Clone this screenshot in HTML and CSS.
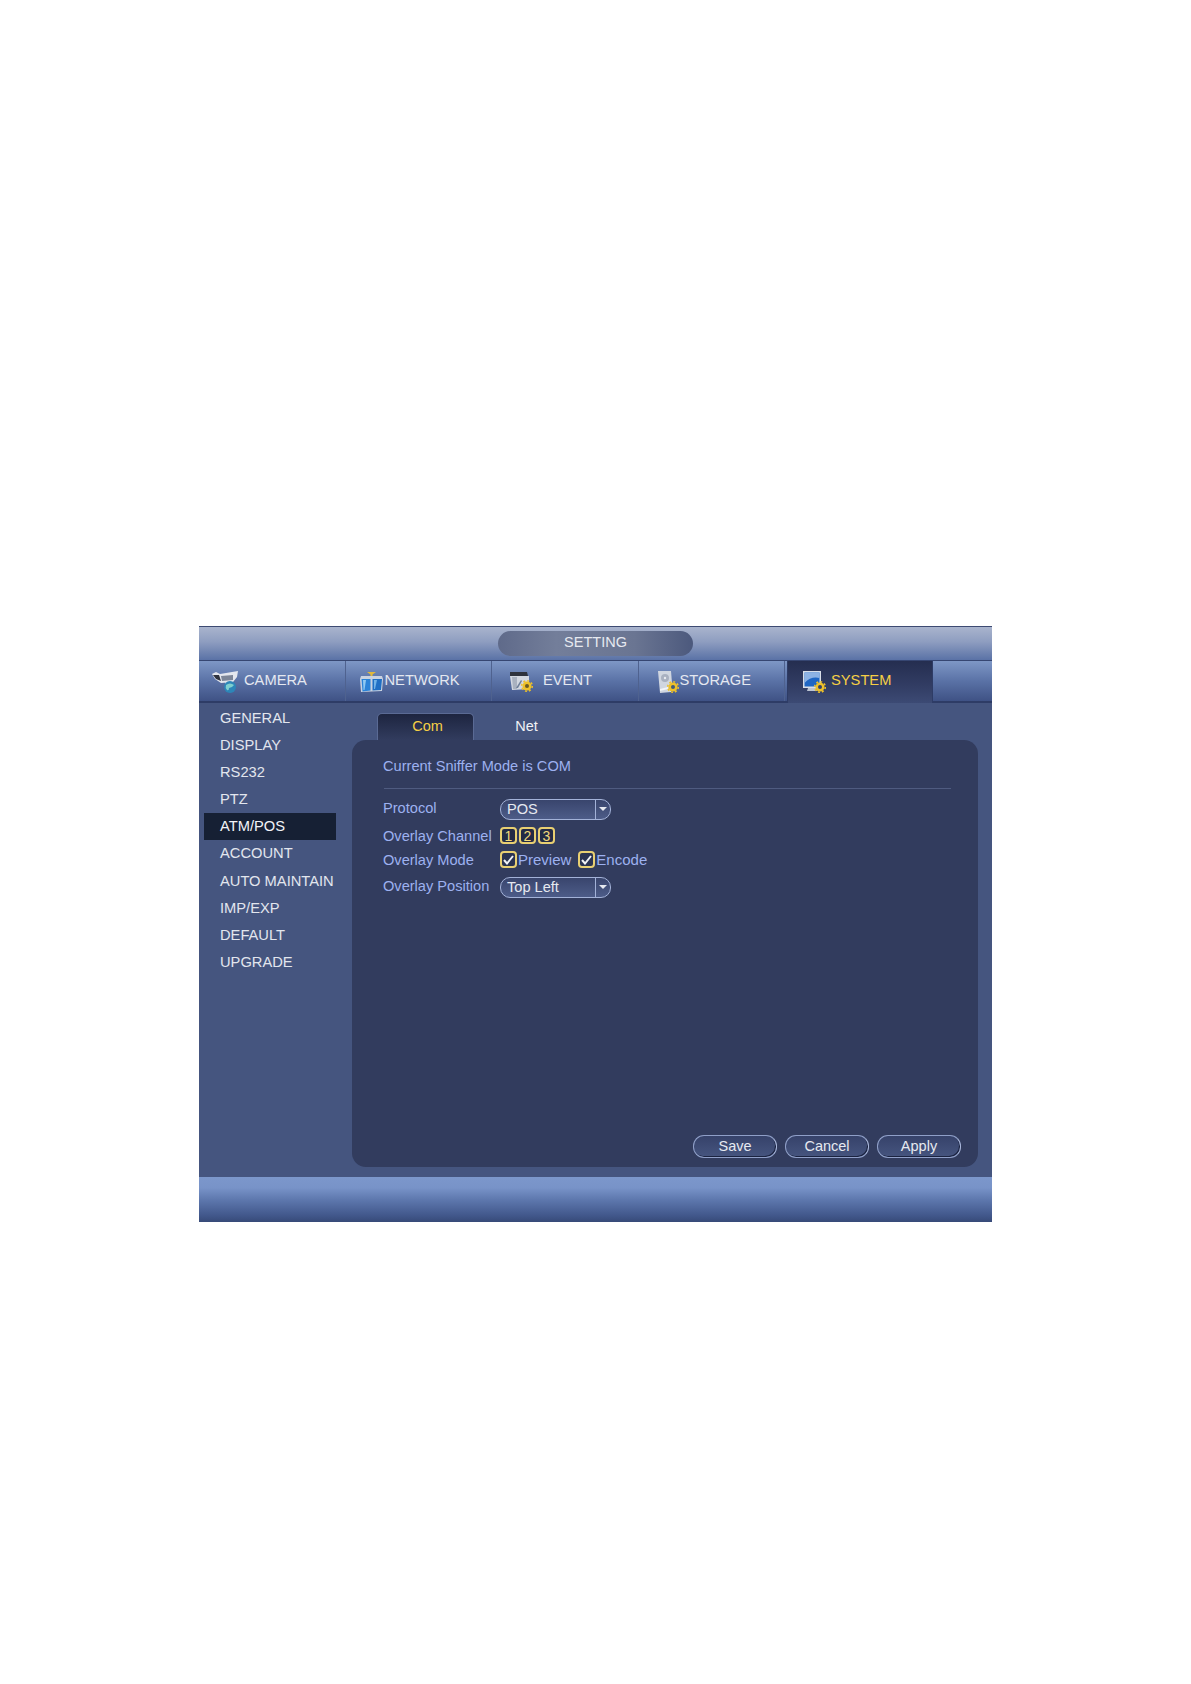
FILE: index.html
```html
<!DOCTYPE html>
<html lang="en">
<head>
    <meta charset="UTF-8">
    <title>SETTING</title>
    <link rel="stylesheet" href="styles.css">
</head>
<body>
<div class="window">
    <div class="title-bar">
        <div class="title-pill">SETTING</div>
    </div>

    <div class="tab-bar">
        <div class="tab tab-camera">
            <svg class="icon" width="26" height="22" viewBox="0 0 26 22">
                <path d="M0 3 L4 1 L8 3 L20 1 L26 0 L25 6 L21 11 L9 12 L3 8 Z" fill="#e4e7ee"/>
                <path d="M1 4 L7 4 L9 10 L4 8 Z" fill="#2f333f"/>
                <path d="M9 5 L21 4 L21 9 L10 10 Z" fill="#7d8698"/>
                <path d="M13 11 L18 10 L18 15 L13 15 Z" fill="#d5d9e2"/>
                <circle cx="18" cy="16" r="6" fill="#2d86b8"/>
                <path d="M14 14 Q18 11 22 14 Q20 17 17 17 Q17 20 15 19 Q13 17 14 14 Z" fill="#7fd0cf"/>
            </svg>
            <span class="tab-label">CAMERA</span>
        </div>
        <div class="tab tab-network">
            <svg class="icon" width="23" height="20" viewBox="0 0 23 20">
                <path d="M7 0 L16 0 L12.500 2.500 L12.500 5 L10.500 5 L10.500 2.500 Z" fill="#e2b93a"/>
                <path d="M1 4 L22 4 L23 7 L22 19 L1 20 L0 7 Z" fill="#c9d2e0"/>
                <path d="M1.500 7 L10.500 7 L10.500 18.500 L2.500 19.500 Z" fill="#2a83d8"/>
                <path d="M12.500 7 L22 7 L21 18 L12.500 18.500 Z" fill="#1f6fc4"/>
                <path d="M3 8 L6 8 L4.500 18 L3.500 18 Z" fill="#8fc9f2"/>
                <path d="M14 8 L17 8 L15 17 L14 17 Z" fill="#6fb2e8"/>
            </svg>
            <span class="tab-label">NETWORK</span>
        </div>
        <div class="tab tab-event">
            <svg class="icon" width="23" height="20" viewBox="0 0 23 20">
                <path d="M0 0 L17 0 L18 4 L0 4 Z" fill="#2e323c"/>
                <path d="M0 4 L19 4 L19 17 L2 18 Z" fill="#d2d7e0"/>
                <path d="M2 5 L7 5 L7 17 L3 17 Z" fill="#a9b1bf"/>
                <path d="M6 16 L11 8 L12 9 L8 16 Z" fill="#6f7f99"/>
                <circle cx="17" cy="14" r="4.500" fill="#edc02a"/>
                <circle cx="17" cy="14" r="5.300" fill="none" stroke="#edc02a" stroke-width="1.500" stroke-dasharray="2 2.100"/>
                <circle cx="17" cy="14" r="2" fill="#6a5a24"/>
            </svg>
            <span class="tab-label">EVENT</span>
        </div>
        <div class="tab tab-storage">
            <svg class="icon" width="21" height="22" viewBox="0 0 21 22">
                <path d="M0 0 L13 0 L14 12 L13 21 L2 22 Z" fill="#d0d6e0"/>
                <circle cx="7" cy="7" r="4" fill="#a9b1c0"/>
                <circle cx="7" cy="7" r="1.200" fill="#e8ebf0"/>
                <path d="M2 18 L10 16 L10 18 L2 20 Z" fill="#f3f5f8"/>
                <circle cx="15" cy="16" r="4.500" fill="#edc02a"/>
                <circle cx="15" cy="16" r="5.300" fill="none" stroke="#edc02a" stroke-width="1.500" stroke-dasharray="2 2.100"/>
                <circle cx="15" cy="16" r="2" fill="#3f5a78"/>
            </svg>
            <span class="tab-label">STORAGE</span>
        </div>
        <div class="tab tab-system">
            <svg class="icon" width="23" height="22" viewBox="0 0 23 22">
                <rect x="0" y="0" width="18" height="17" fill="#d9dee8"/>
                <rect x="1.500" y="1.500" width="15" height="14" fill="#1f66c4"/>
                <path d="M1.500 12 Q8 5 16.500 7 L16.500 1.500 L1.500 1.500 Z" fill="#8db2e4"/>
                <path d="M5 17 L13 17 L14 20 L4 20 Z" fill="#bcc4d2"/>
                <circle cx="17" cy="16" r="4.500" fill="#edc02a"/>
                <circle cx="17" cy="16" r="5.300" fill="none" stroke="#edc02a" stroke-width="1.500" stroke-dasharray="2 2.100"/>
                <circle cx="17" cy="16" r="2" fill="#34406a"/>
            </svg>
            <span class="tab-label">SYSTEM</span>
        </div>
    </div>

    <div class="main">
        <ul class="side-menu">
            <li>GENERAL</li>
            <li>DISPLAY</li>
            <li>RS232</li>
            <li>PTZ</li>
            <li class="active">ATM/POS</li>
            <li>ACCOUNT</li>
            <li>AUTO MAINTAIN</li>
            <li>IMP/EXP</li>
            <li>DEFAULT</li>
            <li>UPGRADE</li>
        </ul>

        <div class="content">
            <div class="sub-tabs">
                <div class="sub-tab active">Com</div>
                <div class="sub-tab">Net</div>
            </div>

            <div class="panel">
                <div class="panel-title">Current Sniffer Mode is COM</div>
                <div class="divider"></div>

                <div class="form">
                    <div class="form-row form-row-select">
                        <label>Protocol</label>
                        <div class="select">
                            <span class="select-value">POS</span>
                            <span class="select-arrow"></span>
                        </div>
                    </div>
                    <div class="form-row">
                        <label>Overlay Channel</label>
                        <div class="channels">
                            <span class="channel">1</span>
                            <span class="channel">2</span>
                            <span class="channel">3</span>
                        </div>
                    </div>
                    <div class="form-row">
                        <label>Overlay Mode</label>
                        <span class="check">
                            <svg width="11" height="10" viewBox="0 0 11 10"><path d="M1 5 L4 8.500 L10 1" fill="none" stroke="#f0f2f6" stroke-width="2"/></svg>
                        </span>
                        <span class="check-label">Preview</span>
                        <span class="check check-second">
                            <svg width="11" height="10" viewBox="0 0 11 10"><path d="M1 5 L4 8.500 L10 1" fill="none" stroke="#f0f2f6" stroke-width="2"/></svg>
                        </span>
                        <span class="check-label">Encode</span>
                    </div>
                    <div class="form-row form-row-select form-row-last">
                        <label>Overlay Position</label>
                        <div class="select">
                            <span class="select-value">Top Left</span>
                            <span class="select-arrow"></span>
                        </div>
                    </div>
                </div>

                <div class="buttons">
                    <button>Save</button>
                    <button>Cancel</button>
                    <button>Apply</button>
                </div>
            </div>
        </div>
    </div>

    <div class="footer"></div>
</div>
</body>
</html>
```

FILE: styles.css
```css
body {
    margin: 0;
    background-color: white;
    font-family: "Liberation Sans", Arial, sans-serif;
}

.window {
    width: 793px;
    height: 596px;
    margin: 626px 0 0 199px;
    display: flex;
    flex-direction: column;
    background-color: #45557f;
}

.title-bar {
    height: 33px;
    display: flex;
    justify-content: center;
    align-items: center;
    border-top: 1px solid #3d4a72;
    border-bottom: 1px solid #364672;
    background: linear-gradient(#a9b4cd, #8e9dc0 45%, #5a72a6);
}

.title-pill {
    width: 195px;
    height: 25px;
    line-height: 23px;
    text-align: center;
    border-radius: 13px;
    color: #e6e9f0;
    font-size: 14.5px;
    background: linear-gradient(90deg, #5f6a8a, #737e9a 30%, #6a7592 70%, #4c597d);
}

.tab-bar {
    height: 40px;
    display: flex;
    flex-shrink: 0;
    border-bottom: 2px solid #2e3c66;
    background: linear-gradient(#7e97c6, #5a72a6 50%, #3f5285);
}

.tab {
    width: 146.500px;
    box-sizing: border-box;
    display: flex;
    align-items: center;
    padding-bottom: 2px;
    color: #e4e8f0;
    font-size: 14.700px;
    border-right: 1px solid #4f628f;
}

.tab .icon {
    flex-shrink: 0;
    margin-top: 4px;
}

.tab-camera {
    padding-left: 13px;
}

.tab-camera .tab-label {
    margin-left: 6px;
}

.tab-network {
    padding-left: 14.500px;
}

.tab-network .tab-label {
    margin-left: 1.500px;
}

.tab-event {
    padding-left: 18px;
}

.tab-event .tab-label {
    margin-left: 10px;
}

.tab-storage {
    padding-left: 19.500px;
}

.tab-storage .tab-label {
    margin-left: 0.500px;
}

.tab-system {
    width: 146px;
    margin-left: 2px;
    padding-left: 15px;
    padding-bottom: 4px;
    color: #f6cf45;
    border-left: 1px solid #2e3c66;
    border-right: 1px solid #2e3c66;
    margin-bottom: -2px;
    background: linear-gradient(#252e50, #323d64 60%, #3c4a74);
}

.tab-system .tab-label {
    margin-left: 5px;
}

.main {
    flex: 1;
    display: flex;
    min-height: 0;
}

.side-menu {
    width: 132px;
    margin: 2px 0 0 5px;
    padding: 0;
    list-style: none;
    flex-shrink: 0;
}

.side-menu li {
    height: 27.100px;
    line-height: 27px;
    padding-left: 16px;
    color: #e2e6ee;
    font-size: 14.700px;
    white-space: nowrap;
}

.side-menu li.active {
    background-color: #162034;
    color: #f2f4f8;
}

.content {
    width: 626px;
    margin: 10px 0 0 16px;
    display: flex;
    flex-direction: column;
}

.sub-tabs {
    height: 27px;
    display: flex;
    padding-left: 25px;
    flex-shrink: 0;
}

.sub-tab {
    width: 97px;
    padding-left: 8px;
    box-sizing: border-box;
    line-height: 26px;
    text-align: center;
    color: #f0f2f6;
    font-size: 14.500px;
}

.sub-tab.active {
    padding-left: 4px;
    line-height: 24px;
    color: #f6cf45;
    border: 1px solid #5a6a94;
    border-bottom: none;
    border-radius: 5px 5px 0 0;
    background: linear-gradient(#1d2540, #323c5e);
}

.panel {
    height: 427px;
    box-sizing: border-box;
    position: relative;
    padding: 16px 27px 0 31px;
    border-radius: 14px;
    background-color: #323c5e;
}

.panel-title {
    height: 20px;
    line-height: 20px;
    color: #9db1f0;
    font-size: 14.600px;
}

.divider {
    height: 1px;
    margin: 12px 0 10px 1px;
    background-color: #4f5b80;
}

.form {
    display: flex;
    flex-direction: column;
    gap: 7px;
}

.form-row {
    display: flex;
    align-items: center;
    color: #9db1f0;
    font-size: 14.600px;
}

.form-row-last {
    margin-top: 2px;
}

.form-row label {
    width: 117px;
    flex-shrink: 0;
}

.form-row-select label {
    margin-bottom: 4px;
}

.select {
    width: 111px;
    height: 21px;
    box-sizing: border-box;
    display: flex;
    border: 1px solid #a3b2d8;
    border-radius: 10px;
    color: #e6e9f0;
    background: linear-gradient(#39456d, #4d5c88);
}

.select-value {
    flex: 1;
    line-height: 19px;
    padding-left: 6px;
    font-size: 14.600px;
}

.select-arrow {
    width: 14px;
    position: relative;
    border-left: 1px solid #a3b2d8;
}

.select-arrow::after {
    content: "";
    position: absolute;
    left: 3px;
    top: 7px;
    border-left: 4px solid transparent;
    border-right: 4px solid transparent;
    border-top: 4px solid #e6e9f0;
}

.channels {
    display: flex;
    gap: 2px;
}

.channel {
    width: 17px;
    height: 17px;
    box-sizing: border-box;
    text-align: center;
    line-height: 14px;
    font-size: 14px;
    color: #f1d97a;
    border: 2px solid #e8cf72;
    border-radius: 4px;
    background-color: #232a45;
}

.check {
    width: 17px;
    height: 17px;
    box-sizing: border-box;
    display: flex;
    align-items: center;
    justify-content: center;
    border: 2px solid #e8cf72;
    border-radius: 4px;
    background-color: #2a3352;
}

.check-label {
    margin-left: 1px;
    font-size: 15px;
}

.check-second {
    margin-left: 7px;
}

.buttons {
    position: absolute;
    right: 17px;
    bottom: 9px;
    display: flex;
    gap: 8px;
}

button {
    width: 84px;
    height: 23px;
    padding: 0 0 2px;
    border: 1px solid #8f9fc8;
    border-right-color: #aab8dc;
    border-radius: 11px;
    color: #e6e9f0;
    font-family: inherit;
    font-size: 14.500px;
    box-shadow: inset -1px -1px 0 #1b2340;
    background: linear-gradient(#36426a, #46557f);
}

.footer {
    height: 45px;
    flex-shrink: 0;
    background: linear-gradient(#7c97cb, #7893c8 24%, #5e78ae 50%, #42588c 85%, #374a78);
}
```
